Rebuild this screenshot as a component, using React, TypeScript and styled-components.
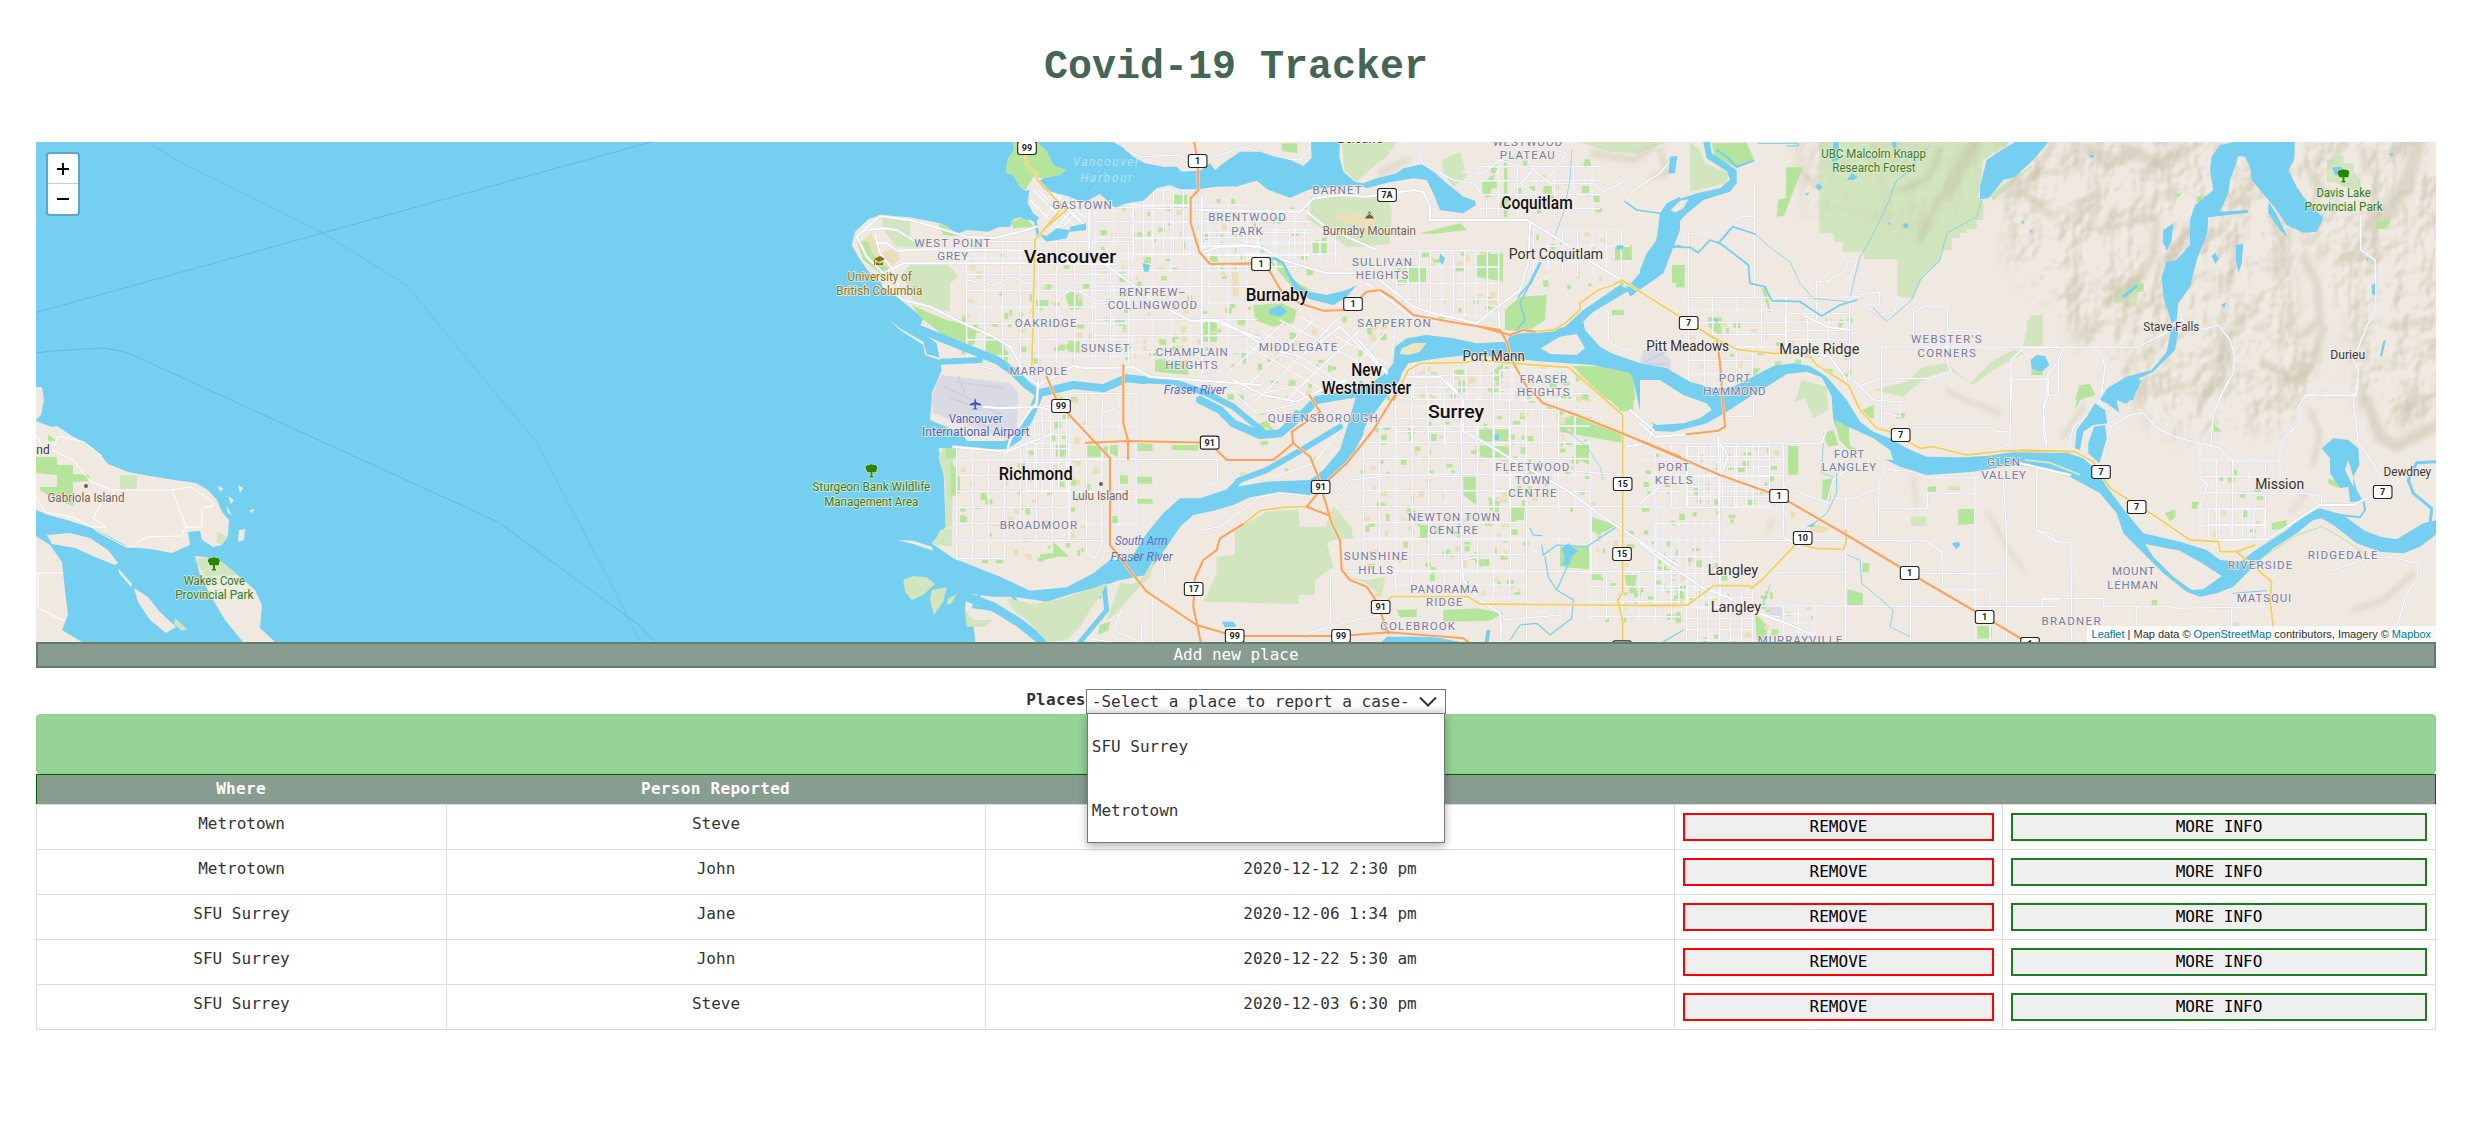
import React from 'react';
import styled, { createGlobalStyle, css } from 'styled-components';

const mono = `'DejaVu Sans Mono', 'Liberation Mono', monospace`;

const GlobalStyle = createGlobalStyle`
  *, *::before, *::after { box-sizing: border-box; }
  body { margin: 0; background: #fff; color: #333; font: 16px/22px ${mono}; }
`;

/* ---------- page parts ---------- */

const Page = styled.main`
  width: 2400px;
  margin: 0 auto 0 36px;
  min-height: 1130px;
`;

const Title = styled.h1`
  margin: 0;
  height: 142px;
  padding-top: 45px;
  text-align: center;
  font: bold 40px/46px 'Liberation Mono', 'Courier New', monospace;
  color: #446655;
`;

const MapFrame = styled.section`
  position: relative;
  height: 500px;
  overflow: hidden;
  background: #75cff0;
`;

const MapArt = styled.svg`
  display: block;
  width: 2400px;
  height: 500px;
`;

const ZoomControl = styled.div`
  position: absolute;
  left: 10px;
  top: 10px;
  width: 34px;
  border: 2px solid rgba(0, 0, 0, 0.2);
  border-radius: 4px;
  background-clip: padding-box;
`;

const ZoomButton = styled.button<{ $last?: boolean }>`
  display: block;
  width: 30px;
  height: 30px;
  padding: 0;
  border: 0;
  border-bottom: ${(p) => (p.$last ? '0' : '1px solid #ccc')};
  border-radius: ${(p) => (p.$last ? '0 0 2px 2px' : '2px 2px 0 0')};
  background: #fff;
  color: #000;
  svg { display: block; margin: auto; }
`;

const Attribution = styled.div`
  position: absolute;
  right: 0;
  bottom: 0;
  height: 16px;
  padding: 0 5px;
  background: rgba(255, 255, 255, 0.7);
  color: #333;
  font: 11px/16px 'Liberation Sans', Arial, sans-serif;
  white-space: nowrap;
  a { color: #0078a8; text-decoration: none; }
`;

const AddButton = styled.button`
  display: block;
  width: 100%;
  height: 26px;
  padding: 0;
  border: 2px solid #607d6d;
  background: #889c8f;
  color: #fff;
  font: 16px/22px ${mono};
`;

const PlacesRow = styled.div`
  display: flex;
  justify-content: center;
  align-items: flex-end;
  height: 46px;
`;

const PlacesLabel = styled.label`
  font-weight: bold;
  line-height: 29px;
  letter-spacing: 0.3px;
`;

const SelectWrap = styled.div`
  position: relative;
  width: 360px;
  height: 25px;
`;

const SelectBox = styled.div`
  display: flex;
  align-items: center;
  justify-content: space-between;
  height: 25px;
  padding: 0 8px 0 5px;
  border: 1px solid #767676;
  background: linear-gradient(#fff 60%, #ececec);
  white-space: nowrap;
`;

const OptionList = styled.ul`
  position: absolute;
  z-index: 2;
  left: 1px;
  top: 24px;
  width: 358px;
  margin: 0;
  padding: 0;
  list-style: none;
  border: 1px solid #767676;
  background: #fff;
  box-shadow: 0 3px 9px rgba(0, 0, 0, 0.32);
`;

const Option = styled.li`
  height: 64px;
  padding-left: 4px;
  line-height: 65px;
`;

const Notice = styled.div`
  height: 60px;
  border: 1px solid #8ccc8c;
  border-radius: 4px;
  background: #96d396;
`;

const Table = styled.table`
  display: block;
  border-bottom: 1px solid #ddd;
`;

const TableHead = styled.thead`
  display: block;
`;

const TableBody = styled.tbody`
  display: block;
`;

const columns = css`
  display: grid;
  grid-template-columns: 410px 539px 689px 328px 434px;
`;

const HeadRow = styled.tr`
  ${columns}
  height: 30px;
  background: #889c8f;
  box-shadow: inset 1px 1px #006400, inset -1px 0 #006400;
  color: #fff;
`;

const HeadCell = styled.th`
  padding: 0;
  text-align: center;
  line-height: 30px;
  letter-spacing: 0.3px;
`;

const Row = styled.tr`
  ${columns}
  height: 45px;
  border-top: 1px solid #ddd;
`;

const Cell = styled.td`
  padding: 8px;
  border-left: 1px solid #ddd;
  text-align: center;
  line-height: 22px;
  &:last-child { border-right: 1px solid #ddd; }
`;

const RowButton = styled.button<{ $tone: string }>`
  display: block;
  width: 100%;
  height: 28px;
  padding: 0;
  border: 2px solid ${(p) => p.$tone};
  background: #efefef;
  color: #000;
  font: 16px/24px ${mono};
`;

/* ---------- map geometry ----------
   The survey is kept as sheets; each sheet has its own origin and three
   units per pixel. */

type Sheet = keyof typeof origins;
const origins = {
  A: [780, 130],
  B: [1200, 130],
  C: [780, 380],
  D: [1200, 380],
  E: [1640, 130],
  F: [2020, 130],
  G: [1640, 380],
  H: [2020, 380],
};

const pts = (s: Sheet, list: string) =>
  list
    .trim()
    .split(/\s+/)
    .map((p) => {
      const [x, y] = p.split(',').map(Number);
      return `${(origins[s][0] + x / 3).toFixed(1)},${(origins[s][1] + y / 3).toFixed(1)}`;
    })
    .join(' ');

const join = (...parts: [Sheet, string][]) => parts.map(([s, l]) => pts(s, l)).join(' ');

const WATER = '#75cff0';
const LAND = '#efe9e1';
const PARK = '#b5e59b';
const RESERVE = '#d1e6be';

const mainland = join(
  ['A', '700,36 702,60 682,90 678,128 700,135 718,168 735,182 748,180 743,220 760,250 778,264 765,278 735,258 700,268 690,290 655,292 625,305 560,300 530,312 500,288 480,280 390,262 300,255 265,268 225,305 215,345 235,380 262,420 300,455 350,500 430,565 415,600 470,640 485,720 455,790'],
  ['C', '455,60 450,120 545,160 560,180 545,205 475,205 490,260 497,440 455,490 520,535 660,590 560,640 555,690 580,730 586,786'],
  ['H', '1260,786'],
  ['F', '1260,30'],
);

const gulfIslands = [
  '36,387 42,387 44,400 41,415 36,420',
  '36,421 52,427 57,426 72,436 84,442 100,454 108,464 128,472 150,476 175,480 196,483 208,490 217,500 222,512 229,520 228,535 222,545 213,547 202,540 200,531 188,532 190,545 172,553 150,549 128,547 112,538 92,528 70,521 48,515 36,510',
  '47,535 70,533 90,538 108,550 118,563 115,565 95,557 75,548 52,544',
  '36,536 50,545 62,562 65,590 68,615 62,630 82,642 36,642',
  '118,568 132,584 131,587 119,573',
  '134,588 148,597 160,612 176,627 166,633 150,620 138,602',
  '195,556 205,557 222,562 240,577 255,590 262,605 260,628 275,642 243,642 225,620 212,598 200,575',
  '239,530 245,529 244,540 238,542',
  '217,486 223,488 221,492', '228,496 234,500 231,504', '226,505 232,515 228,513', '238,485 243,488 240,493', '250,510 255,509 251,514',
];

const burrardInlet = join(
  ['A', '770,36 800,62 820,105 858,120 840,135 790,145 775,155 790,178 830,190 870,200 910,218 960,192 1005,233 1040,220 1090,212 1130,175 1170,165 1200,178 1255,178 1310,170 1380,168'],
  ['B', '100,172 170,152 205,180 270,203 330,178 480,165 500,175 560,158 640,145 680,150 700,190 720,240 790,250 828,225 825,212 790,200 740,160 700,125 665,103 610,115 590,130 520,148 490,160 465,155 430,125 418,80 420,36 333,36 335,85 310,108 270,90 225,80 180,65 120,65 70,100 45,120 30,100 0,122'],
  ['A', '1205,125 1190,110 1150,110 1095,100 1060,80 1025,50 1000,36'],
);

const fraserMain = join(
  ['B', '1095,590 1030,605 930,612 920,635 830,640 760,625 680,615 620,625 585,650 580,700 560,725 500,770'],
  ['D', '480,0 465,60 445,130 420,210 370,270 330,300 200,305 100,322 0,355'],
  ['C', '1200,355 1150,400 1100,460 1050,540 990,540 940,580 860,622 750,632 660,590 620,580 530,540 430,560 450,600 560,640 640,650 700,650 800,665 880,640 960,620 1020,600 1100,585 1160,500 1200,440 1240,405 1300,392'],
  ['D', '100,375 150,352 240,335 330,345 360,320 400,280 450,240 480,180 500,130 560,50 600,0'],
  ['B', '605,730 625,700 680,690 740,682 800,675 900,680 1000,692 1100,700 1180,705 1290,728 1320,720 1200,650 1155,600 1150,575 1180,545 1290,480 1260,465 1150,540'],
);

const fraserEast = join(
  ['E', '0,700 80,715 150,755 220,775 270,775 330,745 400,708 460,700 510,708 560,740 620,810'],
  ['G', '620,60 660,125 700,155 750,175 800,205 860,230 960,232 1040,228 1120,216 1260,216'],
  ['H', '140,218 190,235 230,270 260,320 320,400 370,460 480,485 560,510 600,540 660,545 700,515 800,450 860,400 900,385 970,405 1030,450 1080,470 1130,478 1160,460 1210,430 1250,420 1250,462 1200,500 1150,520 1080,515 1010,490 940,435 905,415 880,420 830,460 760,505 700,560 640,620 590,640 540,650 500,635 430,580 360,510 310,460 290,400 240,340 150,290 50,262'],
  ['G', '1120,255 1000,275 860,285 780,260 710,225 640,205 600,170 580,120 575,50'],
  ['E', '560,770 545,742 500,725 440,732 380,770 330,800'],
  ['G', '260,95 200,130 100,155 30,152'],
  ['D', '1360,135 1320,90 1300,0'],
  ['B', '1290,725 1180,705 1180,650 1320,700 1440,705'],
);

const waterShapes = [
  burrardInlet,
  fraserMain,
  fraserEast,
  pts('E', '190,36 210,36 215,70 290,120 290,160 270,185 190,210 130,260 80,330 50,400 0,445 0,420 20,370 50,330 60,250 110,210 170,190 240,175 270,150 262,125 200,85'),
  pts('B', '1440,200 1400,220 1380,250 1375,310 1345,400 1280,475 1290,500 1390,430 1440,300'),
  pts('E', '1125,36 1225,36 1180,90 1125,140 1090,150 1045,205 1020,207 1020,170 1040,90 1085,60'),
  pts('F', '600,45 640,36 824,36 822,90 805,120 830,170 850,200 910,265 890,305 850,308 800,285 770,240 745,210 720,180 695,150 690,110 675,80 655,78 645,110 630,150 625,190 600,245 685,240 685,248 565,262 562,310 530,390 510,470 475,520 470,570 455,580 430,500 425,440 440,395 470,390 510,345 510,270 525,225 580,180 570,120 575,80'),
  pts('F', '745,215 765,245 803,322 780,300 745,250'),
  pts('F', '430,300 460,280 455,330 440,362 428,335'),
  pts('F', '648,345 670,342 665,400 656,428 647,390'),
  pts('F', '575,378 585,368 596,385 586,402'),
  pts('F', '303,500 350,462 352,472 315,503'),
  pts('F', '936,112 965,110 970,140 945,135'),
  pts('F', '32,690 50,675 75,678 88,705 65,725 35,718'),
  pts('F', '456,585 475,600 465,660 400,725 358,745 340,810 240,810 262,775 320,740 395,720 440,665'),
  pts('F', '603,525 620,516 612,535'), pts('F', '1055,465 1066,460 1065,498 1055,490'), pts('F', '1090,632 1098,630 1086,680 1080,678'),
  pts('F', '1037,383 1047,385 1043,396'), pts('F', '208,75 222,74 222,83 208,82'), pts('F', '1107,70 1120,70 1116,82'),
  pts('E', '1143,274 1154,274 1150,283'), pts('E', '1168,298 1176,302 1172,312'), pts('E', '496,190 508,188 502,198'), pts('E', '743,278 752,277 750,287'),
  pts('H', '365,0 352,30 320,72 290,60 298,98 260,70 240,60 300,5'),
  pts('H', '225,70 255,90 262,130 220,135 190,155 180,210 165,205 170,150 200,110'),
  pts('H', '222,140 255,135 260,175 238,250 205,220 205,190'),
  pts('H', '905,205 940,175 985,180 1015,205 1018,255 1000,290 1010,330 1030,365 990,365 985,320 960,325 930,280 930,235'),
  pts('A', '775,310 800,318 830,295 870,300 860,325 800,335'),
  pts('A', '870,290 918,280 918,300 870,305'),
  pts('A', '1088,400 1110,405 1105,425 1092,425'),
  pts('B', '200,380 245,385 275,440 300,470 330,485 380,495 440,480 470,465 440,500 400,525 330,508 285,480 245,400'),
  pts('B', '205,540 240,525 262,545 240,560 210,552'),
  pts('B', '720,370 735,385 728,405 718,392'),
  pts('B', '1410,80 1432,78 1425,130 1405,130'),
  pts('B', '1250,346 1270,346 1270,358 1250,358'),
  pts('E', '580,36 595,36 598,90 575,95'),
  pts('E', '755,36 770,36 768,60 760,60'),
  pts('E', '620,150 635,130 655,142 640,150'),
  pts('E', '525,170 535,160 548,170 538,182'),
  pts('E', '788,285 798,278 808,288 796,296'),
  pts('E', '218,565 234,568 232,580'),
  pts('D', '1085,505 1105,490 1135,515 1110,530 1105,555 1085,555 1095,530'),
  pts('D', '560,770 700,770 780,786 545,786'),
  pts('D', '65,725 100,725 110,740 75,742'),
  pts('D', '884,165 896,162 896,180 884,180'),
  pts('G', '500,440 525,425 520,440'),
  pts('G', '935,490 955,485 962,495 948,507'),
];

const landPatches = [
  pts('G', '0,92 20,120 50,135 130,130 180,115 215,90 200,70 130,45 60,0 0,0'),
  pts('H', '375,492 480,512 550,552 605,588 550,628 515,630 460,590 400,530'),
  pts('G', '625,140 700,175 750,210 760,240 660,232 628,200'),
  pts('B', '1022,655 1080,620 1130,612 1155,655 1130,675 1050,672'),
  pts('E', '92,240 120,212 145,208 130,235 105,248'),
  pts('H', '985,240 1000,290 1000,320 975,270'),
];

const deltas = [
  pts('C', '370,600 400,588 440,592 465,612 430,645 395,660 375,635'),
  pts('C', '455,630 500,622 490,665 462,705 450,660'),
  pts('C', '505,655 530,642 515,668 500,675'),
  pts('C', '680,655 760,672 830,660 900,638 980,610 960,650 930,690 900,740 860,780 800,786 740,720 700,690'),
  pts('C', '980,720 1020,610 1060,612 1090,590 1130,520 1110,590 1060,640 1010,700'),
  pts('C', '555,690 580,720 640,720 610,740 560,740'),
];

const reserves = [
  pts('C', '490,205 520,210 515,440 497,440 495,300 475,230'),
  pts('C', '480,450 515,445 515,500 460,492'),
  pts('A', '305,262 390,265 390,330 440,330 430,355 350,350 310,300'),
  pts('A', '395,400 500,400 535,440 510,460 510,545 400,520 390,470 360,440'),
  pts('D', '200,395 295,388 300,440 375,440 400,378 455,440 460,480 400,480 380,490 400,560 345,600 345,645 297,645 297,672 10,665 50,580 50,530 105,525 105,440 135,432'),
  pts('D', '440,590 500,600 555,590 545,650 500,610'),
  pts('B', '425,36 590,36 560,80 520,110 470,155 432,120'),
  pts('B', '330,200 560,200 575,240 570,340 500,350 440,350 330,270'),
  pts('B', '725,90 780,65 800,140 760,170 730,130'),
  pts('B', '1135,36 1400,36 1310,70 1235,65'),
  pts('E', '150,36 180,60 195,100 265,130 260,160 150,185'),
  pts('E', '538,36 1110,36 1030,90 1015,200 1030,222 1030,270 1010,270 1010,298 980,298 980,310 960,310 960,325 935,325 935,360 905,362 900,395 850,440 820,505 772,500 772,388 675,388 668,365 608,365 608,335 582,335 582,310 538,310'),
  pts('E', '1050,195 1175,105 1175,112 1060,212'),
  pts('G', '485,0 560,20 565,90 520,115 495,55 465,65'),
  pts('E', '700,780 800,755 850,710 920,700 990,760 1060,690 1120,660 1150,670 1060,720 1000,765 930,720 860,740 790,800'),
  pts('F', '283,485 340,460 360,470 347,530 310,530 310,520 283,520'),
  pts('F', '921,90 935,90 935,75 970,75 970,100 1000,100 1000,125 1022,150 1022,180 1010,190 950,160 921,155'),
  pts('F', '10,640 20,600 20,575 35,555 68,555 68,648 10,648'),
  pts('G', '813,412 860,410 860,437 813,437'),
  pts('G', '925,315 960,320 960,332 925,330'),
];

const parks = [
  pts('A', '700,36 770,36 800,62 820,105 858,120 840,135 790,145 760,140 735,182 718,168 700,135 678,128 682,90 702,60'),
  pts('A', '395,525 440,545 500,570 590,590 585,640 560,655 500,625 420,560'),
  pts('A', '615,620 650,620 685,670 682,705 615,665'),
  pts('A', '855,495 875,482 905,500 910,535 870,540'),
  pts('A', '475,280 500,288 530,312 540,318 490,315'),
  pts('A', '690,275 735,260 762,290 700,295'),
  pts('A', '1180,195 1222,195 1222,240 1180,235'),
  pts('A', '1270,572 1310,572 1310,635 1270,635'),
  pts('A', '1125,690 1220,690 1225,735 1125,725'),
  pts('A', '865,630 900,630 898,668 865,665'),
  pts('A', '768,510 805,510 805,532 768,532'),
  pts('A', '230,335 270,330 290,380 330,420 300,430 250,390'),
  pts('B', '160,525 245,520 290,540 280,580 220,590 165,570'),
  pts('B', '200,385 245,395 280,450 330,480 300,500 250,440'),
  pts('B', '338,335 380,320 380,372 338,370'),
  pts('B', '622,412 678,412 678,455 622,455'),
  pts('B', '830,375 910,370 908,455 830,440'),
  pts('B', '915,540 960,500 1040,495 1035,570 980,605 915,600'),
  pts('B', '1245,350 1295,345 1295,390 1245,390'),
  pts('B', '10,575 50,575 50,635 10,635'),
  pts('B', '660,310 780,280 800,300 700,312'),
  pts('B', '845,160 885,130 870,200 850,205'), pts('B', '1030,168 1055,168 1055,200 1030,195'), pts('B', '912,90 922,90 922,260 912,260'),
  pts('B', '245,40 292,40 292,70 245,62'), pts('B', '1236,540 1272,540 1272,555 1236,555'),
  pts('B', '880,720 910,700 905,760 880,750'),
  pts('B', '1118,708 1280,710 1300,740 1305,810 1215,810'),
  pts('D', '1170,0 1300,0 1300,90 1265,95'),
  pts('D', '1080,120 1120,105 1265,155 1265,188 1080,155'),
  pts('D', '838,148 925,148 925,185 838,185'),
  pts('D', '840,195 925,200 925,245 840,230'),
  pts('D', '790,290 827,290 827,375 790,345'),
  pts('D', '1128,195 1168,195 1168,255 1128,235'),
  pts('D', '930,385 972,380 972,420 930,422'),
  pts('D', '865,350 900,365 895,400 870,390'),
  pts('D', '660,435 683,435 683,475 660,475'),
  pts('D', '1175,412 1250,435 1215,455 1175,455'),
  pts('D', '1075,500 1168,498 1168,568 1075,560'),
  pts('D', '730,690 830,685 910,700 870,722 730,725'),
  pts('D', '590,690 650,688 650,710 600,712'),
  pts('D', '1275,585 1310,585 1305,625 1278,615'),
  pts('D', '1175,583 1205,583 1205,600 1175,600'),
  pts('D', '165,135 200,122 225,155 200,162'),
  pts('C', '497,205 530,205 530,235 497,235'),
  pts('C', '512,240 540,290 540,340 512,350'),
  pts('C', '828,195 867,195 867,232 828,230'),
  pts('C', '920,195 985,200 980,232 920,230'),
  pts('C', '990,195 1015,195 1015,232 990,220'),
  pts('C', '1072,190 1118,192 1118,213 1072,213'),
  pts('C', '1175,195 1255,195 1255,212 1175,210'),
  pts('C', '1072,290 1117,290 1117,311 1072,311'),
  pts('C', '1072,357 1118,357 1118,371 1072,371'),
  pts('C', '1018,286 1043,286 1043,311 1018,311'),
  pts('C', '820,485 868,530 830,530 780,543 780,522 820,520'),
  pts('C', '997,408 1017,408 1017,432 997,432'),
  pts('C', '958,735 990,725 985,750 955,765'),
  pts('E', '215,40 320,38 342,88 292,115 225,80'),
  pts('E', '438,112 490,112 465,170 452,205 432,258 410,260 415,208 438,205'),
  pts('E', '96,405 134,405 134,472 108,472 108,458 96,458'),
  pts('E', '205,562 245,562 245,620 205,590'),
  pts('E', '335,715 362,715 340,745 335,740'),
  pts('E', '365,475 378,470 392,545 388,548'),
  pts('G', '444,198 475,198 475,284 444,284'),
  pts('G', '548,300 578,295 570,362 546,358'),
  pts('G', '548,160 580,150 595,195 565,200'),
  pts('G', '665,90 700,75 703,115 685,115'),
  pts('G', '955,387 1002,387 1002,432 955,435'),
  pts('G', '622,628 668,640 668,675 622,675'),
  pts('G', '1012,738 1055,738 1055,776 1012,776'),
  pts('G', '345,700 380,735 380,786 350,780'),
  pts('G', '863,320 888,318 888,335 863,335'), pts('G', '667,550 690,550 685,578 667,575'), pts('G', '770,100 795,98 793,115 768,115'),
  pts('F', '348,460 371,460 371,485 345,485'),
  pts('F', '1068,275 1110,265 1110,280 1092,297 1068,297'),
  pts('F', '180,765 210,762 225,795 165,810'),
  pts('F', '463,190 485,190 475,205'), pts('F', '530,200 552,198 540,215 528,215'), pts('F', '34,720 68,722 68,735 34,735'),
  pts('H', '178,15 215,20 225,45 180,60 165,90'),
  pts('H', '435,400 465,388 467,410 450,425'),
  pts('H', '515,365 538,365 530,388 515,385'),
  pts('H', '580,130 605,155 582,155'),
  pts('H', '755,430 800,420 800,445 755,450'),
  pts('H', '395,660 412,660 412,676 395,676'), pts('H', '668,392 682,392 682,412 668,412'), pts('H', '598,292 610,292 610,303 598,303'),
  pts('H', '925,295 950,305 955,325 925,310'),
  '48,434 56,441 48,441',
  '36,457 57,457 57,465 73,465 73,474 89,475 89,481 73,482 73,506 57,500 40,490 40,487 57,487 57,475 36,473',
];

const tans = [
  pts('A', '235,340 275,310 300,370 350,350 360,385 330,415 290,400 260,330'),
  pts('B', '400,262 420,248 455,255 470,275 420,275'),
  pts('B', '462,250 530,260 525,290 490,300 460,280'),
  pts('A', '1356,425 1376,425 1376,500 1358,495'),
  pts('G', '515,430 570,445 550,460 515,455'),
  pts('G', '450,395 470,398 455,422'),
];

const airports = [
  join(['A', '485,735 690,760 715,790'], ['C', '715,40 710,140 690,180 460,100 455,60 470,5']),
  pts('B', '1330,660 1375,655 1412,690 1412,725 1318,705'),
  pts('G', '370,680 425,680 425,715 400,715'),
  pts('H', '638,727 658,727 658,738 638,738'),
];

/* ridge shading: sheet, points, width */
const ridges: [Sheet, string, number][] = [
  ['E', '1000,40 960,110 920,190', 13], ['E', '900,200 840,330', 7], ['E', '900,60 860,150 780,180', 6],
  ['E', '60,60 80,130 40,140', 5], ['E', '490,130 530,170', 4], ['E', '1240,40 1150,190 1240,260', 6],
  ['B', '1360,50 1300,90 1180,70', 6], ['B', '540,130 620,90', 5],
  ['F', '1195,40 1170,130 1130,210 1090,260', 14], ['F', '310,50 390,90 430,110 500,60', 10], ['F', '200,50 260,110 350,70', 6],
  ['F', '410,270 400,380 360,440 260,520', 7], ['F', '505,290 490,340 450,385', 7],
  ['F', '760,260 790,350 770,440', 8], ['F', '640,330 640,400 620,490', 5],
  ['F', '850,380 890,460 900,570 840,620', 7], ['F', '910,590 870,720 820,745 730,700', 8], ['F', '620,650 590,730 560,790', 7],
  ['F', '860,110 900,180 940,200', 6], ['F', '1120,590 1240,570', 7], ['F', '1030,60 1040,120', 7],
  ['H', '870,90 900,160 880,250', 5], ['H', '1040,60 1080,170 1130,200 1240,140', 11], ['H', '1180,30 1160,110', 10],
  ['H', '190,80 130,170', 4], ['H', '1180,580 1090,660 1000,690', 5], ['H', '860,340 810,400', 3],
  ['G', '920,30 980,60 1080,100', 4], ['G', '820,290 830,390', 3], ['G', '1040,390 1100,500 1150,570', 3], ['G', '400,420 380,460', 3],
];

/* street grids: sheet, x0, x1, dx, y0, y1, dy */
const grids: [Sheet, number, number, number, number, number, number][] = [
  ['A', 560, 1060, 54, 335, 700, 49], ['A', 945, 1430, 57, 225, 700, 49], ['A', 1060, 1240, 30, 180, 380, 48],
  ['B', 0, 330, 57, 240, 420, 34], ['B', 590, 900, 34, 362, 560, 49], ['B', 130, 420, 46, 300, 400, 36],
  ['B', 840, 1200, 56, 110, 260, 42], ['B', 1000, 1290, 44, 300, 440, 48], ['B', 640, 900, 40, 700, 810, 36], ['B', 900, 1120, 36, 720, 810, 30],
  ['C', 530, 870, 48, 190, 480, 48], ['C', 870, 1068, 49, 40, 480, 98], ['C', 740, 870, 24, 80, 340, 42], ['C', 530, 680, 48, 480, 540, 56],
  ['D', 490, 980, 49, 140, 580, 48], ['D', 586, 830, 49, 40, 190, 38], ['D', 880, 1170, 49, 40, 380, 49],
  ['D', 586, 980, 49, 576, 655, 39], ['D', 980, 1440, 97, 380, 580, 97], ['D', 1170, 1440, 49, 575, 720, 45],
  ['E', 145, 440, 73, 503, 655, 37], ['E', 440, 630, 63, 550, 655, 26], ['E', 145, 340, 48, 650, 760, 41],
  ['G', 45, 435, 49, 190, 380, 48], ['G', 45, 240, 24, 430, 680, 50], ['G', 140, 390, 36, 200, 380, 30], ['G', 140, 340, 33, 620, 786, 32],
  ['G', 430, 530, 46, 675, 770, 27], ['H', 540, 740, 49, 240, 480, 49], ['H', 565, 740, 34, 385, 470, 49],
];

const minorRoads: [Sheet, string][] = [
  ['E', '145,503 145,310 270,308 272,290 300,260 343,260 343,162'], ['E', '343,260 343,503'],
  ['E', '820,640 820,550 855,528 922,528 922,700 935,725 870,745 720,747 650,770'], ['E', '922,602 1015,602 1015,650'],
  ['E', '655,650 1260,652'], ['E', '530,570 530,455 560,455 620,420 622,395 650,395 630,440 627,810'],
  ['E', '660,495 718,485 718,525 665,525'], ['E', '1150,655 1113,690 1113,810'], ['E', '1113,748 1230,748'], ['E', '725,650 725,810'],
  ['E', '680,530 720,555 765,545 775,500'], ['E', '440,550 440,503 660,500'],
  ['F', '0,652 350,652 455,600 475,550 500,590 550,598 595,585 630,630 645,680 640,730 595,810'],
  ['F', '1022,255 1022,360 1065,390 1068,530 1040,590 1000,690 1015,720 1010,797 850,797'],
  ['F', '130,655 115,690 115,797 85,797 80,740 110,700'], ['F', '240,660 255,710 245,790'],
  ['H', '1015,0 1000,60 1015,190 1060,250 1090,310'], ['H', '1010,45 860,45 835,80 845,120 780,190 780,300'],
  ['H', '625,0 580,100 572,200'], ['H', '240,60 270,140 330,105 370,98 410,145 465,170 500,180 540,190 600,205 638,243 780,243'],
  ['H', '145,210 160,140 220,90 240,60 250,0'], ['H', '272,140 250,230'], ['H', '540,190 540,295 562,312 540,380 540,480'],
  ['H', '638,243 638,430 595,480'], ['H', '50,262 50,450 100,465 103,485 153,487 155,786'],
  ['H', '0,680 65,680 65,657 250,655 252,680 450,680 470,685 740,680'], ['H', '350,680 350,786'], ['H', '635,680 635,786'],
  ['H', '85,0 85,45 70,90 70,160 80,205'], ['H', '935,572 1040,535 1110,530 1190,550 1195,590 1160,640 1130,740'],
  ['H', '638,340 860,340 905,350 905,372'], ['H', '1120,325 1160,275'],
  ['G', '0,190 545,190 560,150 540,145'], ['G', '0,480 860,482 905,515 908,630 1050,630 1050,786'], ['G', '617,355 617,786'],
  ['G', '715,480 717,310 735,268 830,275 850,292 1110,292'], ['G', '717,385 862,385 862,340 1005,340'], ['G', '1005,292 1005,786'],
  ['G', '1090,292 1100,480 1100,786'], ['G', '812,482 812,786'], ['G', '345,678 1260,680'], ['G', '1190,265 1190,450 1260,490'],
  ['G', '410,577 615,577'], ['G', '430,190 430,470 480,500'], ['G', '830,580 1100,582'], ['G', '1260,657 1205,657 1205,680'],
  ['G', '575,355 640,355 717,325'], ['G', '800,143 1060,143 1065,155 1110,155'], ['G', '1113,0 1110,190 1060,212'],
  ['G', '1225,0 1210,80 1220,205'], ['G', '430,320 575,372'], ['G', '500,450 560,370 580,300 630,265'], ['G', '0,380 430,385'],
  ['G', '340,0 340,110 262,110'], ['G', '725,0 725,140'], ['G', '640,0 700,60 780,65 780,110 725,95'], ['G', '0,240 180,238'],
  ['C', '1068,20 1068,470'], ['C', '530,240 1312,238 1312,305 1265,318'], ['C', '530,480 990,482'],
  ['C', '1150,500 1155,610 1118,650 1118,786'], ['C', '1030,610 1025,690 1000,750 1080,786'], ['C', '1060,690 1085,720 1085,786'],
  ['C', '920,480 920,520 945,535 965,495 965,100 1050,70'], ['C', '1000,786 880,770'],
  ['D', '390,786 392,575 600,575'], ['D', '420,480 980,480'], ['D', '980,190 980,786'], ['D', '1170,180 1170,570'],
  ['D', '0,450 60,440 180,350 240,340 350,350'], ['D', '1080,270 1270,285 1440,285'], ['D', '785,0 785,540 830,530'],
  ['D', '400,360 450,300 590,285 780,290'], ['D', '440,380 780,380'], ['D', '290,770 440,725 540,705'], ['D', '910,720 1080,705 1080,680'],
  ['B', '1210,540 1225,545 1225,635 1270,660 1300,660'], ['B', '590,560 575,680'], ['B', '660,50 665,100 760,150 820,160 860,210 860,260'],
  ['B', '0,80 60,75 130,50 230,85 300,90 330,50'], ['B', '790,125 850,130 900,90 1000,120 1050,160 1180,160 1210,185 1280,150'],
  ['B', '980,80 1000,120 960,160 1020,200'], ['B', '1420,80 1380,130 1300,180 1280,215'], ['B', '1060,60 1100,70 1040,150'],
  ['A', '985,36 1080,80 1200,75 1230,95'], ['A', '550,700 760,740'], ['A', '560,450 640,465 700,440 740,460 1010,458'],
  ['A', '840,500 870,480 900,485 945,510 1010,512'], ['A', '940,275 1060,275'], ['A', '920,230 1440,242'],
];

const streetsAngled: [Sheet, string][] = [
  ['B', '180,600 500,810'], ['B', '240,570 560,740'], ['B', '300,560 560,700'], ['B', '150,650 420,810'], ['B', '60,570 260,680 400,760'],
  ['B', '420,560 170,810'], ['B', '350,560 130,780'], ['B', '480,600 260,810'], ['B', '560,600 380,810'], ['B', '250,580 80,730'],
  ['A', '760,180 860,280'], ['A', '790,170 900,275'], ['A', '820,190 920,265'], ['A', '750,210 830,290'], ['A', '850,190 790,270'],
  ['A', '880,205 810,300'], ['A', '910,220 850,290'], ['A', '775,180 880,285'], ['A', '805,180 915,285'], ['A', '865,200 800,285'], ['A', '895,215 830,295'],
  ['D', '140,50 280,20 330,60'], ['D', '80,20 170,100 300,70'],
  ['D', '230,290 340,250 420,150 400,100'], ['D', '300,100 350,80 420,120'], ['G', '0,370 80,300'], ['G', '250,640 330,700 420,710'],
];

const mainRoads: [Sheet, string][] = [
  ['A', '230,320 300,258 390,270 460,290 560,320 640,325 740,300 770,290'], ['A', '230,320 260,380 310,430 370,400 760,400 1010,402'],
  ['A', '265,300 310,295 350,300 400,330'], ['A', '290,340 320,340 350,362 440,358 760,362 820,375'], ['A', '285,310 300,370 340,420 355,470'],
  ['A', '310,465 370,510 450,530 550,580 640,620 690,650 740,740 775,765 880,708 920,715 1060,712 1110,740 1240,750 1440,765'],
  ['A', '970,400 1060,465 1130,520 1230,572 1300,572 1440,625'], ['A', '1265,200 1265,740'], ['A', '928,220 928,360'],
  ['A', '1260,370 1320,350 1440,348'], ['B', '0,350 130,345 190,355 250,390 330,415 380,430 470,430'],
  ['B', '0,240 300,245 340,205 420,195 500,200 640,180 670,185 690,230 690,270 860,270 980,270 1080,330 1180,400 1280,460'],
  ['B', '540,450 640,530 700,550 830,580 880,540 960,480 985,400 990,280'], ['B', '500,460 620,550'], ['B', '900,600 895,540'],
  ['B', '320,245 370,285 440,320 530,360'], ['B', '0,570 60,570 150,620 200,655 300,680 420,590 560,730'],
  ['B', '470,625 560,725'],
  ['D', '100,0 190,45 290,65 340,40 440,0'], ['D', '740,0 790,60 790,155 840,180 940,240 1100,330 1230,425 1330,490 1440,560'],
  ['G', '0,490 80,550 190,625 260,650 330,690 440,730 520,765'], ['D', '785,540 790,600 840,660 900,700 905,786'],
  ['D', '1290,90 1360,150 1340,190 1280,200'], ['G', '0,130 45,170 140,163'], ['G', '235,170 240,650'], ['G', '240,190 265,230 240,290'],
  ['C', '610,80 660,85 770,80 810,90'], ['C', '680,220 690,180 750,90 770,70 775,0'], ['C', '520,200 680,215 820,160'],
  ['H', '595,480 740,478 800,440 900,375 1000,375 1060,345'], ['H', '0,250 150,285'], ['E', '490,555 560,590 630,600'],
  ['E', '505,670 570,680 610,735 625,765'], ['B', '620,740 720,740 770,790'],
];

const orange: [Sheet, string][] = [
  ['A', '1243,36 1253,100 1255,180 1232,205 1232,280 1258,365 1290,402 1440,400'],
  ['B', '95,402 195,400 245,485 300,520 370,542 440,540 500,485 540,480 580,505 640,555 750,575 900,600 920,635 935,690 980,770 1030,820 1130,855 1440,980'],
  ['B', '840,590 930,615 970,600 1005,605'],
  ['G', '0,182 240,285 417,348 620,465 809,579 1034,711 1160,786'],
  ['E', '232,635 240,700 248,810 255,890 235,902 140,913'],
  ['A', '800,740 825,800 843,828 990,985 990,1245 1100,1385 1250,1485 1364,1518 1680,1518 1825,1507 2050,1525 2065,1536'],
  ['A', '1030,705 1030,880 1044,930 1044,988'],
  ['C', '918,188 1044,183 1289,188 1315,215 1340,240 1480,240 1540,190 1535,155 1595,115 1620,95 1588,45'],
  ['D', '280,190 330,230 355,290 370,345 395,430 420,480 425,570 450,600 500,620 530,665 565,760'],
  ['D', '590,35 520,150 440,250 390,295 320,380'],
  ['B', '600,770 580,810'],
  ['D', '130,432 60,475 50,510 10,540 -15,595 -20,680 2,786'],
  ['D', '320,380 350,392 385,405'],
];

const yellow: [Sheet, string][] = [
  ['A', '735,70 740,105 770,130 772,150 835,215 860,240 800,290 765,330 755,720'],
  ['A', '835,215 845,235 790,300'],
  ['B', '1005,605 1060,600 1095,580 1140,540 1140,520 1195,480 1240,465 1265,450 1440,560 1550,630'],
  ['E', '146,579 235,630 290,658 400,670 505,672 530,705 625,765 660,840 710,895 750,905 840,955 880,950 980,975 1100,962 1300,965'],
  ['H', '0,210 165,215 220,245 270,325 400,405 510,480 595,485 600,515 650,515 755,605 750,660 765,786'],
  ['H', '650,515 705,495'],
  ['B', '600,770 625,720 660,700 800,697 830,690 1000,705 1105,712 1268,855 1268,1390 1253,1410 1268,1470 1268,1536'],
  ['D', '555,670 575,650 805,650 840,672 1440,677'],
  ['G', '0,677 143,675 220,617 330,617 335,625 365,600 470,490 525,505 610,508 618,490 618,450'],
  ['D', '130,432 180,392 250,382 320,380'], ['D', '345,390 385,405 400,395'],
];

/* narrow channels: sheet, points, width in pixels */
const channels: [Sheet, string, number][] = [
  ['A', '400,590 560,655 650,690 700,725 740,765 775,790 880,765 970,775 1040,745 1090,750', 8],
  ['A', '1070,750 1180,755 1280,790 1360,830 1450,905', 6],
  ['D', '0,60 60,90 100,130 180,165 240,160 300,110 350,60 470,40', 8],
  ['C', '775,50 750,110 715,170 680,195 560,195 440,145', 8],
  ['D', '420,140 330,195 270,230 200,270 120,300 90,330', 6],
  ['D', '290,100 250,150', 6],
  ['C', '560,650 640,680 720,730 790,786', 9], ['C', '970,600 980,690 900,786', 5], ['C', '690,640 740,700 820,690 960,650', 3],
  ['C', '1370,300 1440,280', 3], ['A', '485,695 600,690', 6], ['D', '485,160 440,240', 4],
  ['A', '730,262 765,268 775,320', 3],
  ['C', '600,640 580,680 650,690', 3],
  ['E', '60,350 150,352 175,368 210,330 240,340 280,370 325,405 330,460 375,470 395,512 480,515 545,558 600,525 650,510', 1.8],
  ['E', '235,340 278,290 345,312', 1.8],
  ['E', '345,312 400,360 450,395 480,460 520,505 620,515', 0.7],
  ['E', '870,45 800,130 770,150 735,240 690,330 660,380 630,500', 0.8],
  ['E', '1025,210 1010,260 920,310 900,390 840,450 815,510 740,575 700,535', 0.8],
  ['B', '955,500 990,460 960,520 975,570 950,600', 1.6], ['B', '1020,400 990,460', 3], ['B', '1275,215 1310,240 1380,250', 1.6],
  ['B', '1385,350 1440,348', 2], ['B', '1115,60 1110,150 1090,250 1060,330', 0.7],
  ['D', '1025,495 1030,525 1070,495 1160,500 1250,440', 1.2], ['D', '1035,530 1045,590 1070,630 1120,520', 1.2],
  ['D', '1070,630 1120,660 1115,715 1050,765 1010,730 960,735 930,780', 1.2], ['D', '1090,145 1160,200 1200,260 1210,300', 0.6],
  ['D', '990,445 1000,465 1025,467', 1.2], ['D', '860,786 865,755', 4],
  ['G', '590,280 590,340 560,400 510,440', 0.9], ['G', '622,525 660,540 665,610 760,690 750,740 810,770', 0.8],
  ['G', '390,615 370,670', 0.8], ['G', '550,190 545,280 580,290', 0.8], ['G', '70,786 130,750', 1.2],
  ['H', '1250,245 1190,248 1180,270 1165,300 1180,340 1235,385 1230,430', 3], ['H', '1030,360 1035,390 1020,412 960,405', 2],
  ['H', '640,640 740,632', 1], ['E', '355,40 475,40 475,48 440,48', 1],
  ['E', '230,60 260,80 290,110 340,92', 2],
];

type Kind = 'city' | 'town' | 'village' | 'hood' | 'park' | 'campus' | 'airport' | 'river' | 'harbour' | 'feature';
const kinds: Record<Kind, { fill: string; size: number; weight?: number; italic?: boolean; spaced?: boolean; halo?: string }> = {
  city: { fill: '#111', size: 18.5, weight: 500 },
  town: { fill: '#333', size: 15 },
  village: { fill: '#3a3a3a', size: 12.5 },
  hood: { fill: '#757ca6', size: 11.5, spaced: true },
  park: { fill: '#387b1c', size: 12.5, halo: '#e3ecd9' },
  campus: { fill: '#8a7412', size: 12.5 },
  airport: { fill: '#4a5fb8', size: 12.5 },
  river: { fill: '#5b74bd', size: 12.5, italic: true, halo: 'none' },
  harbour: { fill: '#b4e2f7', size: 12, italic: true, spaced: true, halo: 'none' },
  feature: { fill: '#7a6357', size: 12.5 },
};

/* sheet, kind, centre x, baseline y, width, text */
const labels: [Sheet, Kind, number, number, number, string][] = [
  ['A', 'harbour', 977, 109, 198, 'Vancouver'], ['A', 'harbour', 978, 156, 155, 'Harbour'],
  ['A', 'hood', 906, 238, 178, 'GASTOWN'], ['A', 'hood', 517, 351, 228, 'WEST POINT'], ['A', 'hood', 518, 390, 93, 'GREY'],
  ['A', 'city', 870, 400, 276, 'Vancouver'], ['A', 'hood', 1117, 498, 200, 'RENFREW–'], ['A', 'hood', 1117, 538, 268, 'COLLINGWOOD'],
  ['A', 'hood', 797, 591, 185, 'OAKRIDGE'], ['A', 'hood', 975, 667, 146, 'SUNSET'], ['A', 'hood', 1235, 677, 216, 'CHAMPLAIN'],
  ['A', 'hood', 1234, 717, 157, 'HEIGHTS'], ['A', 'hood', 775, 736, 173, 'MARPOLE'], ['A', 'campus', 299, 452, 193, 'University of'],
  ['A', 'campus', 298, 495, 258, 'British Columbia'], ['A', 'river', 1245, 793, 187, 'Fraser River'],
  ['B', 'town', 481, 38, 138, 'Belcarra'], ['B', 'hood', 982, 48, 208, 'WESTWOOD'], ['B', 'hood', 982, 87, 165, 'PLATEAU'],
  ['B', 'hood', 411, 191, 147, 'BARNET'], ['B', 'city', 1011, 237, 214, 'Coquitlam'], ['B', 'hood', 141, 274, 233, 'BRENTWOOD'],
  ['B', 'hood', 141, 314, 95, 'PARK'], ['B', 'feature', 508, 316, 280, 'Burnaby Mountain'], ['B', 'town', 1068, 386, 283, 'Port Coquitlam'],
  ['B', 'hood', 546, 408, 180, 'SULLIVAN'], ['B', 'hood', 546, 447, 158, 'HEIGHTS'], ['B', 'city', 230, 513, 186, 'Burnaby'],
  ['B', 'hood', 582, 591, 220, 'SAPPERTON'], ['B', 'hood', 294, 663, 236, 'MIDDLEGATE'], ['B', 'town', 881, 693, 187, 'Port Mann'],
  ['B', 'city', 500, 738, 92, 'New'], ['B', 'city', 499, 791, 268, 'Westminster'], ['B', 'hood', 1030, 758, 142, 'FRASER'],
  ['B', 'hood', 1030, 797, 158, 'HEIGHTS'],
  ['C', 'airport', 587, 129, 162, 'Vancouver'], ['C', 'airport', 587, 168, 322, 'International Airport'],
  ['C', 'city', 767, 299, 222, 'Richmond'], ['C', 'feature', 961, 360, 168, 'Lulu Island'], ['C', 'hood', 775, 447, 232, 'BROADMOOR'],
  ['C', 'river', 1084, 496, 158, 'South Arm'], ['C', 'river', 1085, 543, 187, 'Fraser River'],
  ['C', 'park', 274, 334, 354, 'Sturgeon Bank Wildlife'], ['C', 'park', 274, 378, 282, 'Management Area'],
  ['D', 'hood', 368, 127, 330, 'QUEENSBOROUGH'], ['D', 'city', 768, 115, 168, 'Surrey'], ['D', 'hood', 997, 273, 222, 'FLEETWOOD'],
  ['D', 'hood', 997, 312, 104, 'TOWN'], ['D', 'hood', 997, 352, 145, 'CENTRE'], ['D', 'hood', 762, 424, 276, 'NEWTON TOWN'],
  ['D', 'hood', 761, 463, 146, 'CENTRE'], ['D', 'hood', 527, 541, 192, 'SUNSHINE'], ['D', 'hood', 527, 581, 104, 'HILLS'],
  ['D', 'hood', 733, 640, 204, 'PANORAMA'], ['D', 'hood', 733, 679, 110, 'RIDGE'], ['D', 'hood', 653, 751, 224, 'COLEBROOK'],
  ['E', 'park', 701, 85, 314, 'UBC Malcolm Knapp'], ['E', 'park', 702, 127, 250, 'Research Forest'],
  ['E', 'hood', 919, 640, 212, "WEBSTER'S"], ['E', 'hood', 920, 681, 175, 'CORNERS'], ['E', 'town', 143, 662, 248, 'Pitt Meadows'],
  ['E', 'town', 538, 671, 240, 'Maple Ridge'], ['E', 'hood', 284, 756, 95, 'PORT'], ['E', 'hood', 283, 796, 187, 'HAMMOND'],
  ['F', 'park', 971, 201, 163, 'Davis Lake'], ['F', 'park', 971, 243, 235, 'Provincial Park'], ['F', 'village', 454, 603, 168, 'Stave Falls'],
  ['F', 'village', 983, 687, 105, 'Durieu'],
  ['G', 'hood', 627, 235, 90, 'FORT'], ['G', 'hood', 627, 274, 163, 'LANGLEY'], ['G', 'hood', 101, 274, 95, 'PORT'],
  ['G', 'hood', 101, 312, 113, 'KELLS'], ['G', 'hood', 1091, 257, 98, 'GLEN'], ['G', 'hood', 1091, 297, 134, 'VALLEY'],
  ['G', 'town', 279, 585, 152, 'Langley'], ['G', 'town', 288, 695, 152, 'Langley'], ['G', 'hood', 480, 792, 254, 'MURRAYVILLE'],
  ['H', 'hood', 153, 735, 177, 'BRADNER'], ['H', 'town', 779, 326, 147, 'Mission'], ['H', 'village', 1162, 289, 143, 'Dewdney'],
  ['H', 'hood', 340, 586, 128, 'MOUNT'], ['H', 'hood', 338, 626, 152, 'LEHMAN'], ['H', 'hood', 720, 568, 194, 'RIVERSIDE'],
  ['H', 'hood', 968, 538, 210, 'RIDGEDALE'], ['H', 'hood', 732, 667, 163, 'MATSQUI'],
  ['A', 'village', -2211, 971, 40, 'nd'], ['A', 'feature', -2082, 1115, 231, 'Gabriola Island'],
  ['A', 'park', -1697, 1364, 184, 'Wakes Cove'], ['A', 'park', -1697, 1407, 235, 'Provincial Park'],
];

const shields: [Sheet, number, number, string][] = [
  ['A', 741, 54, '99'], ['A', 1253, 93, '1'], ['B', 561, 195, '7A'], ['B', 183, 402, '1'], ['B', 459, 522, '1'],
  ['C', 843, 78, '99'], ['C', 1289, 188, '91'], ['C', 1241, 627, '17'], ['C', 1364, 768, '99'], ['D', 362, 321, '91'],
  ['D', 1268, 312, '15'], ['D', 1266, 522, '15'], ['D', 542, 681, '91'], ['D', 423, 768, '99'], ['D', 1266, 802, '15'],
  ['E', 146, 579, '7'], ['G', 782, 165, '7'], ['G', 417, 348, '1'], ['G', 488, 474, '10'], ['G', 809, 579, '1'],
  ['G', 1034, 711, '1'], ['G', 1170, 792, '1'], ['H', 243, 276, '7'], ['H', 350, 381, '7'], ['H', 1088, 336, '7'],
];

/* small parks and school yards sprinkled over built-up districts */
const districts: [Sheet, number, number, number, number, number][] = [
  ['A', 545, 345, 1230, 690, 95], ['A', 950, 190, 1430, 380, 40], ['A', 1240, 400, 1440, 700, 20], ['B', 0, 220, 330, 440, 26],
  ['B', 580, 360, 900, 560, 30], ['B', 860, 70, 1200, 250, 24], ['B', 80, 560, 560, 800, 40], ['B', 980, 290, 1290, 500, 22],
  ['B', 600, 700, 1150, 810, 40], ['C', 540, 200, 970, 540, 52], ['C', 800, 40, 960, 180, 12], ['D', 480, 120, 980, 640, 120],
  ['D', 880, 40, 1170, 390, 50], ['D', 1180, 430, 1440, 720, 34], ['D', 100, 20, 420, 300, 14], ['G', 0, 200, 430, 430, 40],
  ['G', 0, 460, 240, 700, 34], ['G', 140, 620, 520, 780, 20], ['E', 150, 560, 640, 750, 34], ['H', 545, 250, 780, 480, 14],
];

const flecks = (() => {
  let seed = 7;
  const rnd = () => ((seed = (seed * 16807) % 2147483647) / 2147483647);
  return districts.flatMap(([s, x0, y0, x1, y1, n]) =>
    Array.from({ length: n }, () => {
      const x = origins[s][0] + (x0 + rnd() * (x1 - x0)) / 3;
      const y = origins[s][1] + (y0 + rnd() * (y1 - y0)) / 3;
      return { x, y, w: 2.5 + rnd() * 5, h: 2.5 + rnd() * 4.5, c: rnd() > 0.35 ? PARK : '#eadfb8' };
    }),
  );
})();

const gridLines = grids.flatMap(([s, x0, x1, dx, y0, y1, dy]) => {
  const out: string[] = [];
  for (let x = x0; x <= x1 + 1; x += dx) out.push(pts(s, `${x},${y0} ${x},${y1}`));
  for (let y = y0; y <= y1 + 1; y += dy) out.push(pts(s, `${x0},${y} ${x1},${y}`));
  return out;
});

const Tree = ({ x, y }: { x: number; y: number }) => (
  <g transform={`translate(${x} ${y})`} fill="#2b8500" stroke="#e6efdc" strokeWidth="1.2" paintOrder="stroke">
    <path d="M-3-6C-6-6-7-3-5-1C-5 1-3 2-1 1V5H-2V6.500H2V5H1V1C4 2 6 1 5-1C7-4 5-6 3-6C1-7-1-7-3-6Z" />
  </g>
);

const Lines = ({ items, color, width }: { items: [Sheet, string][]; color: string; width: number }) => (
  <g fill="none" stroke={color} strokeWidth={width} strokeLinejoin="round" strokeLinecap="round">
    {items.map(([s, l], i) => <polyline key={i} points={pts(s, l)} />)}
  </g>
);

const Polys = ({ items, color }: { items: string[]; color: string }) => (
  <g fill={color}>{items.map((p, i) => <polygon key={i} points={p} />)}</g>
);

const VancouverMap = () => (
  <MapArt viewBox="36 142 2400 500" aria-label="Map of Greater Vancouver">
    <defs>
      <filter id="soft" x="-5%" y="-5%" width="110%" height="110%"><feGaussianBlur stdDeviation="2.6" /></filter>
      <filter id="relief" x="0" y="0" width="100%" height="100%" colorInterpolationFilters="sRGB">
        <feTurbulence type="fractalNoise" baseFrequency="0.02 0.016" numOctaves="4" seed="23" result="height" />
        <feDiffuseLighting in="height" surfaceScale="17" lightingColor="#fff" result="lit">
          <feDistantLight azimuth="225" elevation="48" />
        </feDiffuseLighting>
        <feColorMatrix in="lit" values="0 0 0 0 0.8  0 0 0 0 0.77  0 0 0 0 0.68  -1.7 0 0 0 1.4" />
      </filter>
      <filter id="feather" x="-5%" y="-5%" width="110%" height="110%"><feGaussianBlur stdDeviation="10" /></filter>
      <mask id="highland" maskUnits="userSpaceOnUse" x="1700" y="100" width="800" height="500">
        <g filter="url(#feather)" fill="#fff">
          <polygon points="1990,120 2460,120 2460,400 2420,430 2365,420 2345,330 2320,250 2290,240 2300,330 2325,360 2300,430 2220,430 2160,440 2130,400 2060,320 2010,260" />
          <polygon points="1790,120 2000,120 1960,220 1900,240 1800,210" opacity=".5" />
        </g>
      </mask>
      <clipPath id="land"><polygon points={mainland} /></clipPath>
    </defs>
    <rect x="36" y="142" width="2400" height="500" fill={WATER} />
    <g fill="none" stroke="#5fb5ea" strokeWidth="0.9">
      <polyline points="36,312.500 640,145 652,142" />
      <polyline points="147,142 180,162 323,233 406,285 537,443 610,582 640,642" opacity=".65" />
      <polyline points="36,353 52,351 104,348 126,352 498,522 640,626 655,642" />
    </g>
    <Polys items={gulfIslands} color={LAND} />
    <polygon points="120,475 137,475 137,490 120,490" fill={RESERVE} />
    <polygon points="195,560 207,557 222,562 238,575 205,576" fill={RESERVE} />
    <polygon points="217,532 228,537 222,545 217,543" fill={RESERVE} />
    <polygon points="175,618 187,629 182,631 174,624" fill={RESERVE} />
    <polygon points={mainland} fill={LAND} />
    <polygon points={pts('A', '325,567 360,595 430,635 440,672 485,685 485,715 478,690 435,675 430,645 360,600')} fill={LAND} />
    <polygon points={pts('C', '350,480 400,482 455,500 460,512 400,492')} fill={LAND} />
    <Polys items={reserves} color={RESERVE} />
    <g clipPath="url(#land)">
      <g mask="url(#highland)"><rect x="1760" y="142" width="676" height="330" filter="url(#relief)" opacity=".6" /></g>
      <g filter="url(#soft)" fill="none" stroke="#c4bca4" opacity=".42" strokeLinecap="round" strokeLinejoin="round">
        {ridges.map(([s, l, w], i) => <polyline key={i} points={pts(s, l)} strokeWidth={w} />)}
      </g>
    </g>
    <Polys items={airports} color="#d9dae3" />
    <g fill="none" stroke="#cdcfdc" strokeWidth="1.6">
      <path d="M943 386L1000 414M955 382L1003 388M950 398L980 408M958 376L966 396M1645 362L1665 352M1648 364H1668" />
    </g>
    <Polys items={parks} color={PARK} />
    <Polys items={tans} color="#eadfb8" />
    {flecks.map((f, i) => <rect key={i} x={f.x} y={f.y} width={f.w} height={f.h} fill={f.c} />)}
    <g fill="none" stroke="#d9dbea" strokeWidth="1.9">{gridLines.map((p, i) => <polyline key={i} points={p} />)}</g>
    <g fill="none" stroke="#fff" strokeWidth="1">{gridLines.map((p, i) => <polyline key={i} points={p} />)}</g>
    <Lines items={minorRoads} color="#d8daea" width={2.1} />
    <Lines items={minorRoads} color="#fff" width={1.1} />
    <Lines items={streetsAngled} color="#dbdcea" width={1.9} />
    <Lines items={streetsAngled} color="#fff" width={1.1} />
    <Polys items={waterShapes} color={WATER} />
    <g fill="none" stroke={WATER} strokeLinejoin="round" strokeLinecap="round">
      {channels.map(([s, l, w], i) => <polyline key={i} points={pts(s, l)} strokeWidth={w} />)}
    </g>
    <Polys items={landPatches} color={LAND} />
    <polygon points={pts('B', '605,655 640,640 680,638 660,665 625,675 600,672')} fill="#ebe5c2" />
    <polygon points={pts('G', '585,120 625,140 630,195 655,212 625,208 598,180')} fill={PARK} />
    <Polys items={deltas} color={RESERVE} />
    <polyline points={pts('H', '15,240 90,248 180,284')} fill="none" stroke={RESERVE} strokeWidth="2" />
    <polyline points={pts('H', '700,550 830,465 905,440 960,470 1040,525')} fill="none" stroke={PARK} strokeWidth="1" />
    <polyline points={pts('A', '1003,50 965,130 920,185 870,205')} fill="none" stroke="#5fb5ea" strokeWidth=".8" strokeDasharray="2 1.500" />
    <Lines items={mainRoads} color="#d4d7e8" width={2.9} />
    <Lines items={mainRoads} color="#fff" width={1.9} />
    <g fill="none" stroke="#fff" strokeWidth="1" strokeLinejoin="round">
      <path d="M36 435L42 446M58 436L53 450L74 461L90 481L112 490H170L191 487L200 493L214 503L212 506L202 508L202 527H186L172 490M186 527L181 536L148 537L140 540L134 547L126 547L98 532L92 527H106L93 518L100 506V500M36 497L45 512L72 517L92 527M58 436L84 442L102 456M36 573H63M38 573V608L64 621" />
    </g>
    <Lines items={yellow} color="#f8f0df" width={2.8} />
    <Lines items={yellow} color="#f3cf61" width={1.8} />
    <Lines items={orange} color="#f8eadf" width={3} />
    <Lines items={orange} color="#fba35d" width={2.1} />
    <circle cx="86" cy="486" r="2" fill="#75594d" />
    <circle cx="1101" cy="484" r="2" fill="#75594d" />
    <Tree x={214} y={564} />
    <Tree x={871.5} y={471} />
    <Tree x={2343.5} y={176} />
    <path d="M1365 218.500L1369.500 211L1374 218.500Z" fill="#75594d" />
    <path d="M1367 215.500L1369.500 213.500L1372 215.500" fill="none" stroke="#efe9e1" />
    <g fill="#8a7412">
      <path d="M874 259L880 256L885 259L879 262ZM876 262V265H883V262L880 263.500ZM874 260H875V265H874Z" />
    </g>
    <path d="M975 398L976 400V402L981 404V405.500L976 405V408L978 409.500H972L974.500 408V405L970 405.500V404L974.500 402V400Z" fill="#4058bd" />
    <g fontFamily="Roboto, 'Open Sans', sans-serif" textAnchor="middle">
      {labels.map(([s, k, x, y, w, t], i) => {
        const st = kinds[k];
        return (
          <text
            key={i}
            x={origins[s][0] + x / 3}
            y={origins[s][1] + y / 3}
            textLength={w / 3}
            lengthAdjust={st.spaced ? 'spacing' : 'spacingAndGlyphs'}
            fontSize={st.size}
            fontWeight={st.weight ?? 400}
            fontStyle={st.italic ? 'italic' : 'normal'}
            fill={st.fill}
            stroke={st.halo ?? '#f3eee8'}
            strokeWidth="1.8"
            strokeLinejoin="round"
            strokeOpacity=".85"
            paintOrder="stroke"
          >
            {t}
          </text>
        );
      })}
      {shields.map(([s, x, y, t], i) => (
        <g key={i} transform={`translate(${origins[s][0] + x / 3} ${origins[s][1] + y / 3})`}>
          <rect x="-9.300" y="-6.500" width="18.600" height="13" rx="2.200" fill="#fff" stroke="#222" strokeWidth="1.1" />
          <text y="3.300" fontSize="9" fontWeight="700" fill="#222">{t}</text>
        </g>
      ))}
    </g>
  </MapArt>
);

const reports = [
  ['Metrotown', 'Steve', ''],
  ['Metrotown', 'John', '2020-12-12 2:30 pm'],
  ['SFU Surrey', 'Jane', '2020-12-06 1:34 pm'],
  ['SFU Surrey', 'John', '2020-12-22 5:30 am'],
  ['SFU Surrey', 'Steve', '2020-12-03 6:30 pm'],
];

export default function App() {
  return (
    <Page>
      <GlobalStyle />
      <Title>Covid-19 Tracker</Title>
      <MapFrame>
        <VancouverMap />
        <ZoomControl>
          <ZoomButton aria-label="Zoom in">
            <svg width="14" height="14"><path d="M7 1V13M1 7H13" stroke="#000" strokeWidth="2" /></svg>
          </ZoomButton>
          <ZoomButton $last aria-label="Zoom out">
            <svg width="14" height="14"><path d="M1 7H13" stroke="#000" strokeWidth="2" /></svg>
          </ZoomButton>
        </ZoomControl>
        <Attribution>
          <a>Leaflet</a> | Map data © <a>OpenStreetMap</a> contributors, Imagery © <a>Mapbox</a>
        </Attribution>
      </MapFrame>
      <AddButton>Add new place</AddButton>
      <PlacesRow>
        <PlacesLabel>Places</PlacesLabel>
        <SelectWrap>
          <SelectBox>
            -Select a place to report a case-
            <svg width="18" height="12"><path d="M1 1.500L9 9.500L17 1.500" fill="none" stroke="#333" strokeWidth="2" /></svg>
          </SelectBox>
          <OptionList>
            <Option>SFU Surrey</Option>
            <Option>Metrotown</Option>
          </OptionList>
        </SelectWrap>
      </PlacesRow>
      <Notice />
      <Table>
        <TableHead>
          <HeadRow>
            <HeadCell>Where</HeadCell>
            <HeadCell>Person Reported</HeadCell>
          </HeadRow>
        </TableHead>
        <TableBody>
          {reports.map(([where, person, when], i) => (
            <Row key={i}>
              <Cell>{where}</Cell>
              <Cell>{person}</Cell>
              <Cell>{when}</Cell>
              <Cell><RowButton $tone="#f00">REMOVE</RowButton></Cell>
              <Cell><RowButton $tone="#1e7b1e">MORE INFO</RowButton></Cell>
            </Row>
          ))}
        </TableBody>
      </Table>
    </Page>
  );
}
